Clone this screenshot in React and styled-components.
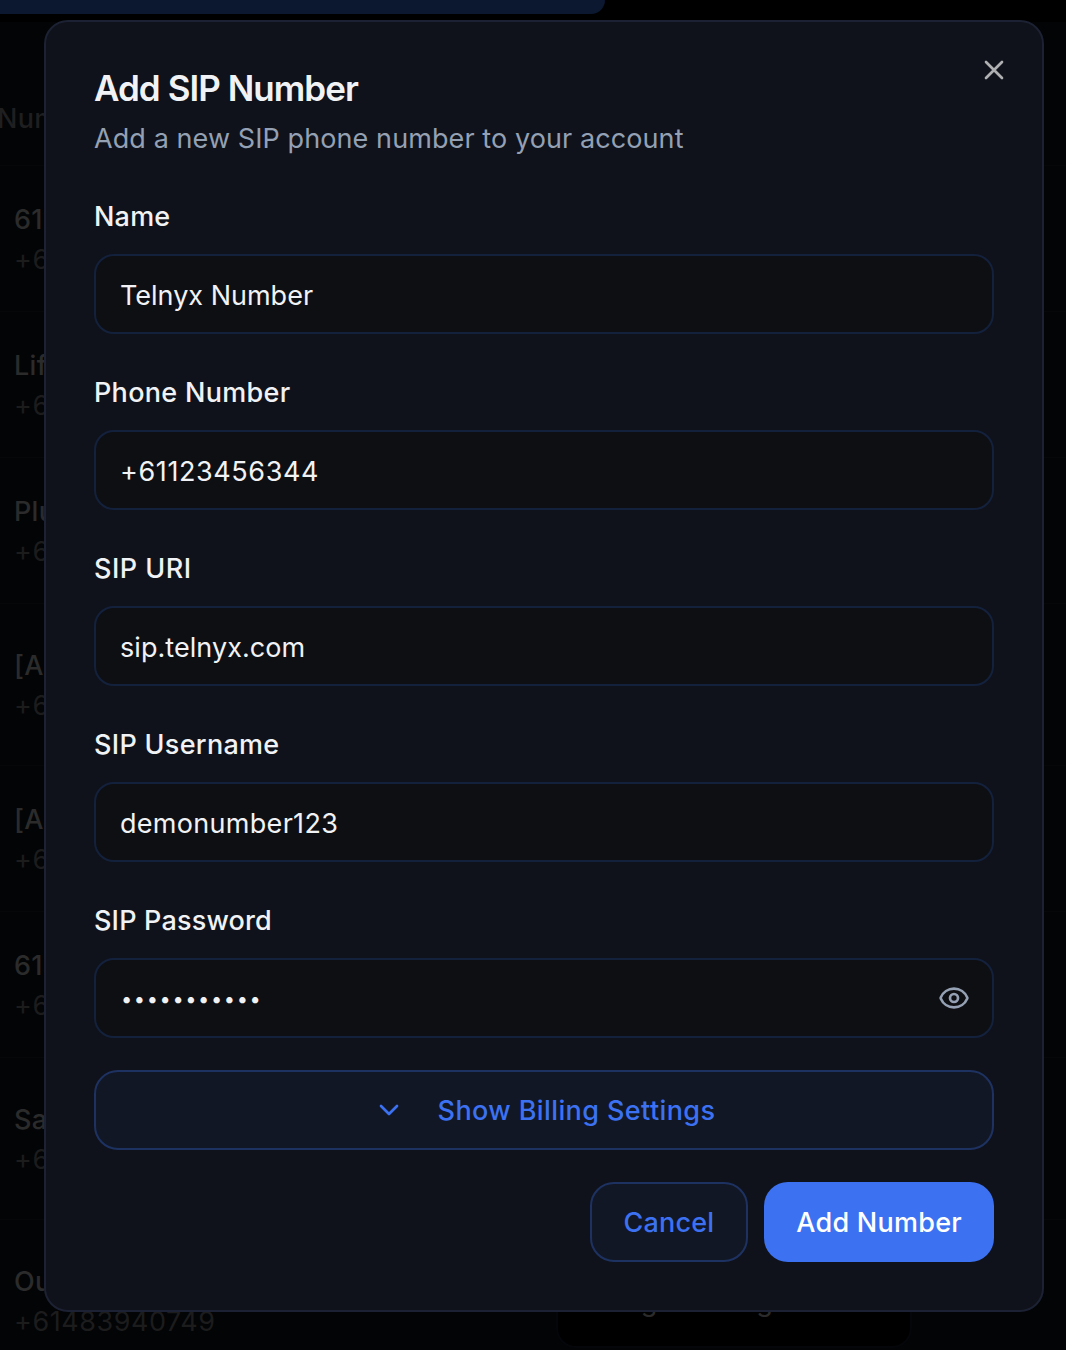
import React, { useState } from "react";
import styled, { createGlobalStyle } from "styled-components";

const GlobalStyle = createGlobalStyle`
  *, *::before, *::after { box-sizing: border-box; }
  html, body { margin: 0; height: 1350px; overflow: hidden; background: #000; }
  body, input, button { font-family: Inter, "Liberation Sans", sans-serif; font-size: 27px; }
  h2, p { margin: 0; }
`;

const Screen = styled.div`
  position: relative;
  width: 1066px;
  height: 1350px;
  overflow: hidden;
`;

const Page = styled.main`
  display: flex;
  flex-direction: column;
  height: 100%;
`;

const TopBar = styled.div`
  width: 605px;
  height: 14px;
  margin-bottom: 8px;
  flex: none;
  background: #0c1830;
  border-bottom-right-radius: 16px;
`;

const Table = styled.div`
  flex: none;
  background: #030406;
`;

const HeadRow = styled.div`
  height: 144px;
  padding-top: 50px;
  display: flex;
  align-items: center;
  border-bottom: 1px solid #060709;
  color: #1f1f20;
  font-weight: 500;
  letter-spacing: 0.3px;
  text-indent: -3px;
`;

const Row = styled.div`
  height: ${(p) => p.$height}px;
  padding: 2px 14px 0;
  display: grid;
  grid-template-columns: 542px 356px;
  align-items: center;
  border-bottom: 1px solid #050709;
`;

const Contact = styled.div`
  display: flex;
  flex-direction: column;
  line-height: 40px;
`;

const ContactName = styled.span`
  color: #2b2b2b;
  font-weight: 500;
  letter-spacing: 0.3px;
`;

const ContactNumber = styled.span`
  color: #1c1c1d;
  letter-spacing: 0.55px;
`;

const Assigned = styled.div`
  height: 93px;
  padding-left: 20px;
  display: flex;
  align-items: center;
  background: #000;
  border: 2px solid #04060a;
  border-radius: 20px;
  color: #2b2b2b;
  letter-spacing: 0.5px;
`;

const Overlay = styled.div`
  position: absolute;
  inset: 0;
  padding: 20px 22px 38px 44px;
`;

const Dialog = styled.section`
  position: relative;
  width: 1000px;
  height: 1292px;
  padding: 48px;
  display: flex;
  flex-direction: column;
  background: #0f121a;
  border: 2px solid #1c2233;
  border-radius: 24px;
`;

const CloseButton = styled.button`
  position: absolute;
  top: 32px;
  right: 32px;
  width: 32px;
  height: 32px;
  padding: 0;
  border: 0;
  background: none;
  color: #afb0b2;
  svg { display: block; }
`;

const Title = styled.h2`
  color: #f1f2f5;
  font-size: 35px;
  line-height: 36px;
  font-weight: 600;
  letter-spacing: -0.95px;
`;

const Subtitle = styled.p`
  margin-top: 13px;
  color: #94a0b3;
  line-height: 40px;
  letter-spacing: 0.09px;
`;

const Form = styled.form`
  margin-top: 44px;
  display: flex;
  flex-direction: column;
  gap: 45px;
`;

const Field = styled.label`
  display: flex;
  flex-direction: column;
  gap: 23px;
`;

const FieldLabel = styled.span`
  color: #f1f2f5;
  line-height: 28px;
  font-weight: 500;
  letter-spacing: ${(p) => p.$tracking}px;
`;

const InputShell = styled.div`
  height: 80px;
  padding: 0 24px;
  display: flex;
  align-items: center;
  background: #0e0f13;
  border: 2px solid #14213d;
  border-radius: 20px;
`;

const Input = styled.input`
  flex: 1;
  min-width: 0;
  height: 40px;
  padding: 2px 0 0;
  border: 0;
  outline: 0;
  background: none;
  color: #f1f2f5;
  letter-spacing: ${(p) => p.$tracking}px;

  &[type="password"] {
    padding-left: 1px;
    font-size: 20px;
    letter-spacing: 1.6px;
  }
`;

const IconButton = styled.button`
  padding: 0;
  border: 0;
  background: none;
  color: #94a0b3;
  margin-right: -2px;
  svg { display: block; }
`;

const Button = styled.button`
  height: 80px;
  padding: 0 32px;
  display: flex;
  align-items: center;
  justify-content: center;
  gap: 33px;
  border: ${(p) => (p.$primary ? "0" : "2px solid #1e3262")};
  border-radius: 24px;
  background: ${(p) => (p.$primary ? "#3c72f2" : "#111724")};
  color: ${(p) => (p.$primary ? "#fff" : "#3c72f2")};
  font-weight: 500;
  letter-spacing: ${(p) => (p.$primary ? 0.25 : 0.2)}px;
`;

const BillingButton = styled(Button)`
  margin-top: -13px;
  letter-spacing: 0.4px;
`;

const Actions = styled.div`
  display: flex;
  justify-content: flex-end;
  gap: 16px;
  margin-top: 32px;
`;

const Icon = ({ size, stroke = 2, children }) => (
  <svg width={size} height={size} viewBox="0 0 24 24" fill="none" stroke="currentColor"
    strokeWidth={stroke} strokeLinecap="round" strokeLinejoin="round" aria-hidden="true">
    {children}
  </svg>
);

const contacts = [
  { name: "61", number: "+61", height: 146 },
  { name: "Life", number: "+61", height: 146 },
  { name: "Plu", number: "+61", height: 146 },
  { name: "[A", number: "+61", height: 162 },
  { name: "[A", number: "+61", height: 146 },
  { name: "61", number: "+61", height: 146 },
  { name: "Sa", number: "+61", height: 162 },
  { name: "Out", number: "+61483940749", height: 162, assigned: "Billing Booking" },
];

const fields = [
  { label: "Name", value: "Telnyx Number", labelTracking: 0.2, tracking: 0 },
  { label: "Phone Number", value: "+61123456344", labelTracking: 0.3, tracking: 0.6 },
  { label: "SIP URI", value: "sip.telnyx.com", labelTracking: 0.5, tracking: 0.05 },
  { label: "SIP Username", value: "demonumber123", labelTracking: 0.3, tracking: 0.3 },
  { label: "SIP Password", value: "password123", labelTracking: 0.18, tracking: 0, secret: true },
];

function FormField({ label, value, labelTracking, tracking, secret }) {
  const [visible, setVisible] = useState(false);
  return (
    <Field>
      <FieldLabel $tracking={labelTracking}>{label}</FieldLabel>
      <InputShell>
        <Input
          type={secret && !visible ? "password" : "text"}
          $tracking={tracking}
          defaultValue={value}
          aria-label={label}
        />
        {secret && (
          <IconButton type="button" aria-label="Show password" onClick={() => setVisible(!visible)}>
            <Icon size={32}>
              <path d="M2.062 12.348a1 1 0 0 1 0-.696 10.75 10.75 0 0 1 19.876 0 1 1 0 0 1 0 .696 10.75 10.75 0 0 1-19.876 0" />
              <circle cx="12" cy="12" r="3" />
            </Icon>
          </IconButton>
        )}
      </InputShell>
    </Field>
  );
}

export default function App() {
  return (
    <>
      <GlobalStyle />
      <Screen>
        <Page>
          <TopBar />
          <Table>
            <HeadRow>Num</HeadRow>
            {contacts.map((c, i) => (
              <Row key={i} $height={c.height}>
                <Contact>
                  <ContactName>{c.name}</ContactName>
                  <ContactNumber>{c.number}</ContactNumber>
                </Contact>
                {c.assigned && <Assigned>{c.assigned}</Assigned>}
              </Row>
            ))}
          </Table>
        </Page>
        <Overlay>
          <Dialog role="dialog" aria-label="Add SIP Number">
            <CloseButton aria-label="Close">
              <Icon size={32}><path d="M18 6 6 18M6 6l12 12" /></Icon>
            </CloseButton>
            <Title>Add SIP Number</Title>
            <Subtitle>Add a new SIP phone number to your account</Subtitle>
            <Form>
              {fields.map((f) => <FormField key={f.label} {...f} />)}
              <BillingButton type="button">
                <Icon size={32}><path d="m6 9 6 6 6-6" /></Icon>
                Show Billing Settings
              </BillingButton>
            </Form>
            <Actions>
              <Button type="button">Cancel</Button>
              <Button type="button" $primary>Add Number</Button>
            </Actions>
          </Dialog>
        </Overlay>
      </Screen>
    </>
  );
}
